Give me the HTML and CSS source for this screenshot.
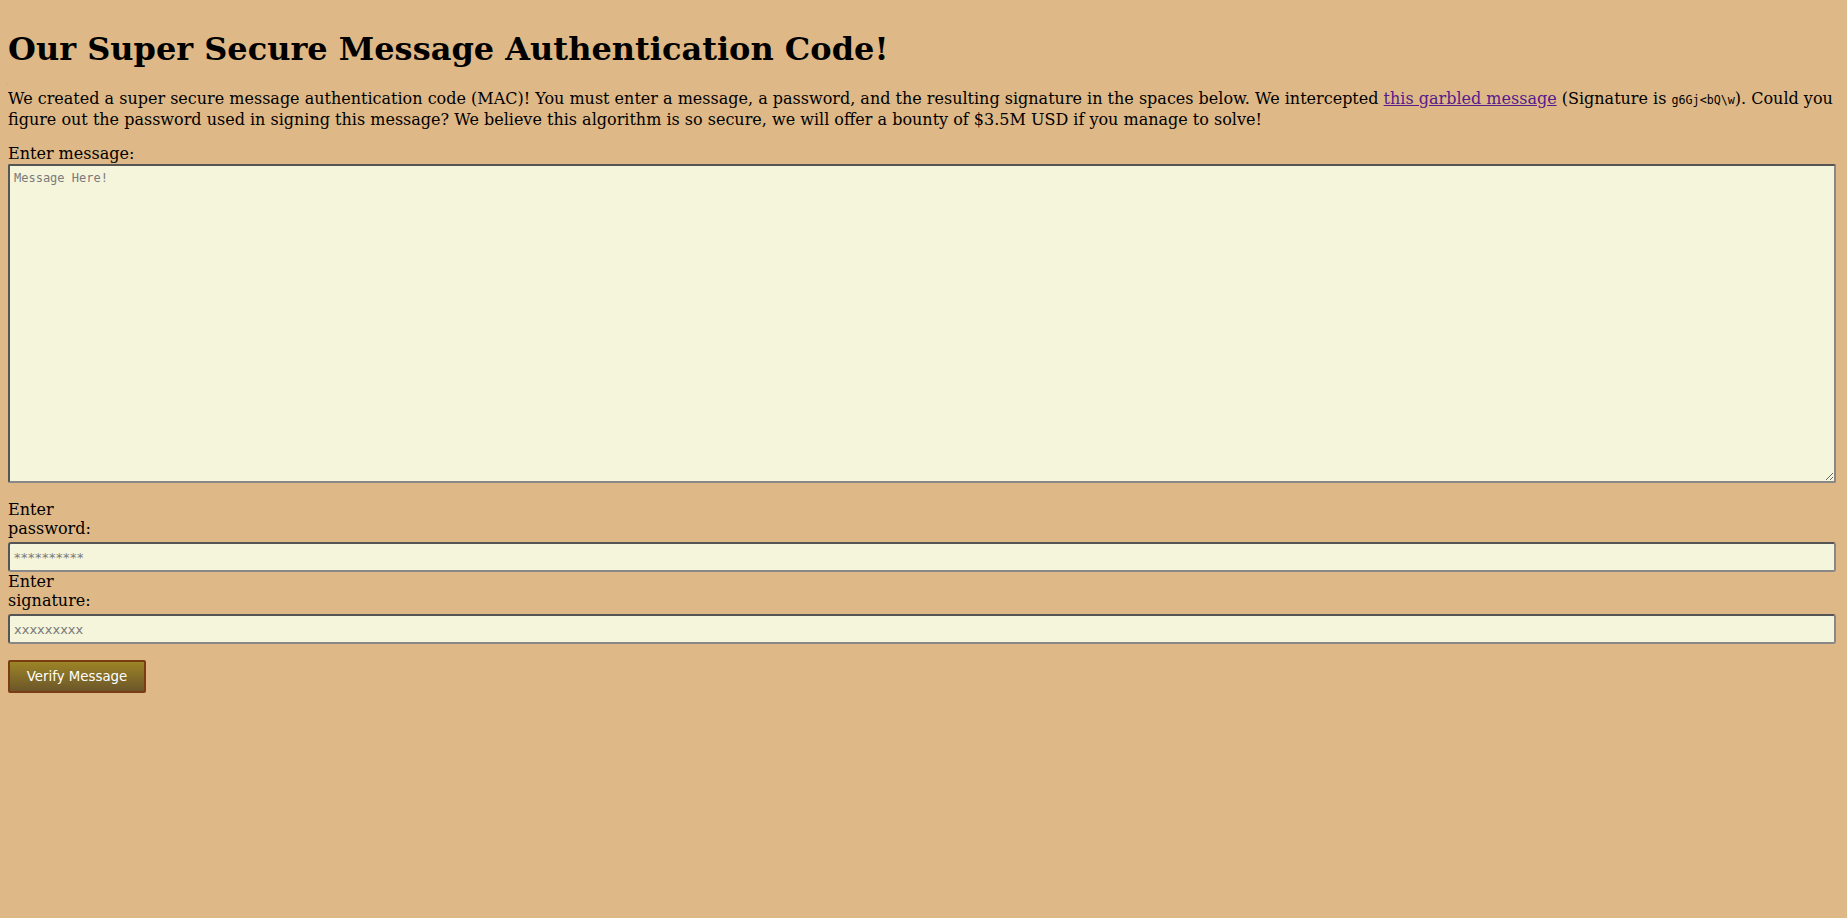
FILE: index.html
```html
<!DOCTYPE html>
<html>
<head>
<meta charset="utf-8">
<title>MAC</title>
<link rel="stylesheet" href="styles.css">
</head>
<body>
<h1 class="title">Our Super Secure Message Authentication Code!</h1>
<p class="intro">We created a super secure message authentication code (MAC)! You must enter a message, a password, and the resulting signature in the spaces below. We intercepted <a class="link" href="#">this garbled message</a> (Signature is <code class="sig">g6Gj&lt;bQ\w</code>). Could you figure out the password used in signing this message? We believe this algorithm is so secure, we will offer a bounty of $3.5M USD if you manage to solve!</p>
<form class="form">
  <label class="label" for="msg">Enter message:</label>
  <textarea class="message" id="msg" placeholder="Message Here!"></textarea>
  <label class="label label-narrow label-gap" for="pw">Enter password:</label>
  <input class="field field-pw" id="pw" type="text" placeholder="**********">
  <label class="label label-narrow" for="sig">Enter signature:</label>
  <input class="field" id="sig" type="text" placeholder="xxxxxxxxx">
  <button class="verify" type="button">Verify Message</button>
</form>
</body>
</html>
```
FILE: styles.css
```css
html { background: #deb887; }
body {
  margin: 8px;
  font-family: "DejaVu Serif", serif;
  font-size: 16px;
  color: #000;
}
.title {
  font-size: 32px;
  font-weight: bold;
  margin: 22px 0 21px;
}
.intro {
  margin: 16px 0 15px;
  line-height: 19px;
}
.link { color: #551a8b; }
.sig {
  font-family: "DejaVu Sans Mono", monospace;
  font-size: 11.7px;
}
.form {
  display: flex;
  flex-direction: column;
  align-items: flex-start;
}
.label {
  display: block;
  line-height: 19px;
}
.label-narrow { width: min-content; }
.label-gap { margin-top: 17px; }
.message {
  box-sizing: border-box;
  width: calc(100% - 3px);
  height: 319px;
  margin: 1px 0 0;
  background: #f5f5dc;
  border: 2px solid #555;
  border-right-color: #888;
  border-bottom-color: #888;
  border-radius: 2px;
  padding: 5px 4px;
  font-family: "DejaVu Sans Mono", monospace;
  font-size: 12px;
  resize: both;
}
.message::placeholder { color: #7a7a7a; }
.field {
  box-sizing: border-box;
  width: calc(100% - 3px);
  height: 30px;
  margin: 4px 0 0;
  background: #f5f5dc;
  border: 2px solid #555;
  border-right-color: #888;
  border-bottom-color: #888;
  border-radius: 3px;
  padding: 1px 4px;
  font-family: "DejaVu Sans", sans-serif;
  font-size: 13px;
}
.field::placeholder { color: #7a7a7a; }
.field-pw::placeholder { letter-spacing: 0.5px; }
.verify {
  margin-top: 16px;
  width: 138px;
  height: 33px;
  background: linear-gradient(#9c8427, #6c5629);
  border: 2px solid #7a3c12;
  border-radius: 2px;
  color: #fff;
  font-family: "DejaVu Sans", sans-serif;
  font-size: 13.33px;
  padding: 0;
}
```
